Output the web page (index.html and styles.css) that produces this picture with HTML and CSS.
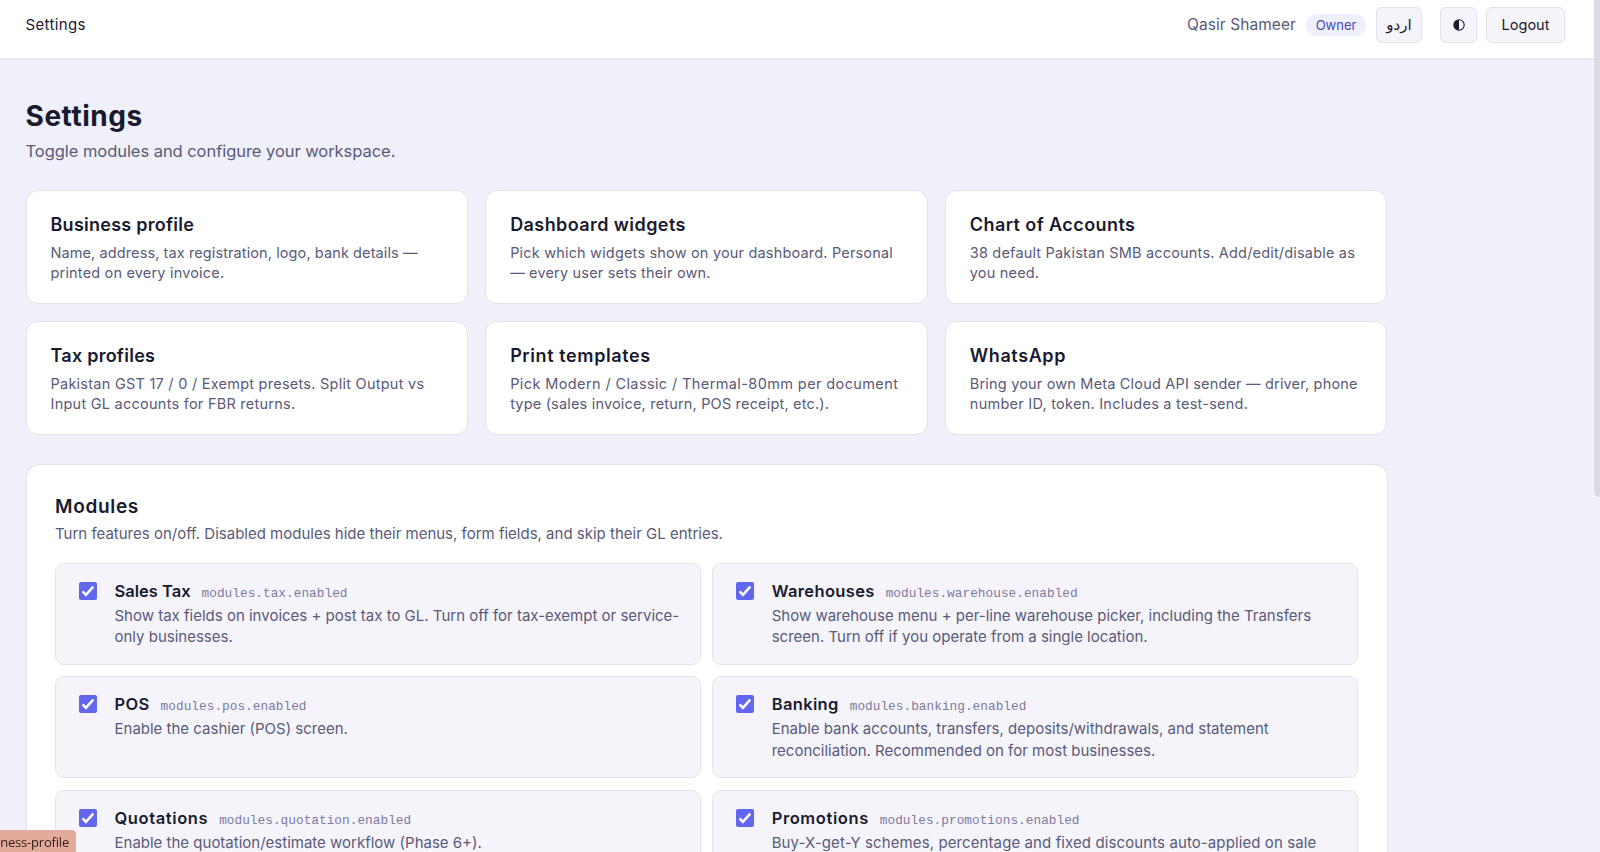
FILE: index.html
```
<!DOCTYPE html>
<html lang="en">
<head>
<meta charset="utf-8">
<title>Settings</title>
<link rel="stylesheet" href="styles.css">
</head>
<body>
<header class="topbar">
  <span class="crumb">Settings</span>
  <div class="actions">
    <span class="user">Qasir Shameer</span>
    <span class="role">Owner</span>
    <button class="btn btn-lang" lang="ur">اردو</button>
    <button class="btn btn-theme" aria-label="Theme"><svg width="12" height="12" viewBox="0 0 12 12"><circle cx="6" cy="6" r="5.2" fill="none" stroke="#1a1a2e" stroke-width="1.1"/><path d="M6 1a5 5 0 0 0 0 10z" fill="#1a1a2e"/></svg></button>
    <button class="btn btn-logout">Logout</button>
  </div>
</header>
<main class="page">
  <h1 class="title">Settings</h1>
  <p class="subtitle">Toggle modules and configure your workspace.</p>
  <section class="cards">
    <a class="card"><h2 class="card-title snug">Business profile</h2><p class="card-text"><span class="tight">Name, address, tax registration, logo, bank details —</span><br>printed on every invoice.</p></a>
    <a class="card"><h2 class="card-title">Dashboard widgets</h2><p class="card-text">Pick which widgets show on your dashboard. Personal<br>— every user sets their own.</p></a>
    <a class="card"><h2 class="card-title">Chart of Accounts</h2><p class="card-text">38 default Pakistan SMB accounts. Add/edit/disable as<br>you need.</p></a>
    <a class="card"><h2 class="card-title snug">Tax profiles</h2><p class="card-text"><span class="snug">Pakistan GST 17 / 0 / Exempt presets. Split Output vs</span><br><span class="snug">Input GL accounts for FBR returns.</span></p></a>
    <a class="card"><h2 class="card-title wide">Print templates</h2><p class="card-text"><span class="loose">Pick Modern / Classic / Thermal-80mm per document</span><br>type (sales invoice, return, POS receipt, etc.).</p></a>
    <a class="card"><h2 class="card-title wide">WhatsApp</h2><p class="card-text">Bring your own Meta Cloud API sender — driver, phone<br><span class="snug">number ID, token. Includes a test-send.</span></p></a>
  </section>
  <section class="panel">
    <h2 class="panel-title">Modules</h2>
    <p class="panel-text">Turn features on/off. Disabled modules hide their menus, form fields, and skip their GL entries.</p>
    <div class="modules">
      <label class="module"><svg class="check" viewBox="0 0 18 18"><rect width="18" height="18" rx="2" fill="#6366f1"/><path d="M3.6 9.4l3.3 3.4 7.4-8.2" fill="none" stroke="#fff" stroke-width="2.5"/></svg><div class="module-body"><div class="module-head"><strong class="flat">Sales Tax</strong><code>modules.tax.enabled</code></div><p class="module-text">Show tax fields on invoices + post tax to GL. Turn off for tax-exempt or service-<br>only businesses.</p></div></label>
      <label class="module"><svg class="check" viewBox="0 0 18 18"><rect width="18" height="18" rx="2" fill="#6366f1"/><path d="M3.6 9.4l3.3 3.4 7.4-8.2" fill="none" stroke="#fff" stroke-width="2.5"/></svg><div class="module-body"><div class="module-head"><strong>Warehouses</strong><code>modules.warehouse.enabled</code></div><p class="module-text">Show warehouse menu + per-line warehouse picker, including the Transfers<br>screen. Turn off if you operate from a single location.</p></div></label>
      <label class="module"><svg class="check" viewBox="0 0 18 18"><rect width="18" height="18" rx="2" fill="#6366f1"/><path d="M3.6 9.4l3.3 3.4 7.4-8.2" fill="none" stroke="#fff" stroke-width="2.5"/></svg><div class="module-body"><div class="module-head"><strong>POS</strong><code>modules.pos.enabled</code></div><p class="module-text">Enable the cashier (POS) screen.</p></div></label>
      <label class="module"><svg class="check" viewBox="0 0 18 18"><rect width="18" height="18" rx="2" fill="#6366f1"/><path d="M3.6 9.4l3.3 3.4 7.4-8.2" fill="none" stroke="#fff" stroke-width="2.5"/></svg><div class="module-body"><div class="module-head"><strong>Banking</strong><code>modules.banking.enabled</code></div><p class="module-text">Enable bank accounts, transfers, deposits/withdrawals, and statement<br>reconciliation. Recommended on for most businesses.</p></div></label>
      <label class="module"><svg class="check" viewBox="0 0 18 18"><rect width="18" height="18" rx="2" fill="#6366f1"/><path d="M3.6 9.4l3.3 3.4 7.4-8.2" fill="none" stroke="#fff" stroke-width="2.5"/></svg><div class="module-body"><div class="module-head"><strong class="wide">Quotations</strong><code>modules.quotation.enabled</code></div><p class="module-text">Enable the quotation/estimate workflow (Phase 6+).</p></div></label>
      <label class="module"><svg class="check" viewBox="0 0 18 18"><rect width="18" height="18" rx="2" fill="#6366f1"/><path d="M3.6 9.4l3.3 3.4 7.4-8.2" fill="none" stroke="#fff" stroke-width="2.5"/></svg><div class="module-body"><div class="module-head"><strong class="wide">Promotions</strong><code>modules.promotions.enabled</code></div><p class="module-text tight">Buy-X-get-Y schemes, percentage and fixed discounts auto-applied on sale</p></div></label>
    </div>
  </section>
</main>
<div class="scroll-thumb"></div>
<div class="status">ness-profile</div>
</body>
</html>
```
FILE: styles.css
```
* { box-sizing: border-box; margin: 0; }
html, body { height: 852px; overflow: hidden; }
body { background: #eff0f9; color: #1a1a2e; font-family: Inter, "DejaVu Sans", sans-serif; font-size: 15px; }
.topbar { height: 60px; padding: 7px 35px 0 25.5px; background: #fff; border-bottom: 2px solid #e5e5ee; display: flex; align-items: flex-start; justify-content: space-between; }
.crumb { line-height: 35px; font-size: 15px; letter-spacing: .36px; }
.actions { display: flex; align-items: center; height: 35px; }
.user { color: #5a5a78; font-size: 15.5px; letter-spacing: .07px; margin-right: 10px; }
.role { display: flex; justify-content: center; width: 60px; height: 22px; border-radius: 11px; background: #eef0ff; color: #4f46b5; font-size: 13px; line-height: 22px; margin-right: 10px; }
.btn { height: 36px; padding: 0; border: 1px solid #e2e1ec; border-radius: 6px; background: #f5f4fb; color: #1a1a2e; font: 15px Inter, "DejaVu Sans", sans-serif; display: flex; align-items: center; justify-content: center; }
.btn-lang { width: 46px; margin-right: 18px; }
.btn-theme { width: 37px; margin-right: 9px; }
.btn-logout { width: 79px; font-size: 14.5px; }
.page { display: flex; flex-direction: column; width: 1413px; height: 792px; padding: 37px 25.5px 0; overflow: hidden; }
.title { font-size: 28px; font-weight: 700; line-height: 39px; letter-spacing: .55px; }
.subtitle { margin-top: 3px; font-size: 16.5px; line-height: 24px; letter-spacing: -.05px; color: #5a5a78; }
.cards { display: grid; grid-template-columns: repeat(3, minmax(0, 1fr)); gap: 17px; margin-top: 27px; }
.card { height: 114px; padding: 20px 24px; border: 1px solid #e2e1ec; border-radius: 12px; background: #fff; white-space: nowrap; }
.card-title { font-size: 18px; font-weight: 600; line-height: 27px; letter-spacing: .42px; }
.card-text { margin-top: 5px; font-size: 14.5px; line-height: 20.3px; letter-spacing: .18px; color: #5a5a78; }
.panel { flex: 1; min-height: 0; margin-top: 29px; padding: 28px 28.5px 0; border: 1px solid #e2e1ec; border-bottom: 0; border-radius: 14px 14px 0 0; background: #fff; overflow: hidden; }
.panel-title { font-size: 19px; font-weight: 600; line-height: 28px; letter-spacing: .68px; }
.panel-text { margin-top: 2px; font-size: 15px; line-height: 22px; color: #5a5a78; white-space: nowrap; }
.modules { display: grid; grid-template-columns: repeat(2, minmax(0, 1fr)); gap: 11.4px; margin-top: 18px; }
.module { height: 102px; padding: 14px 22.5px; display: flex; gap: 18px; border: 1px solid #e4e3ed; border-radius: 9px; background: #f5f4fb; white-space: nowrap; }
.check { width: 18px; height: 18px; margin-top: 4px; flex: none; }
.module-head { display: flex; align-items: baseline; gap: 11px; height: 27px; line-height: 26px; }
.module-head strong { font-size: 16.5px; font-weight: 600; letter-spacing: .35px; }
.module-head code { font: 12.75px "Liberation Mono", monospace; letter-spacing: .03px; color: #7d79a0; }
.module-text { font-size: 15px; line-height: 21.3px; color: #5a5a78; }
.tight { letter-spacing: .1px; }
.snug { letter-spacing: .25px; }
.loose { letter-spacing: .39px; }
.wide, .module-head .wide { letter-spacing: .6px; }
.module-head .flat { letter-spacing: 0; }
.scroll-thumb { position: fixed; top: 0; right: 0; width: 6.5px; height: 497px; background: #dadae5; border-bottom-left-radius: 6px; }
.status { position: fixed; left: 0; bottom: 0; width: 76px; height: 22px; padding-right: 7px; display: flex; justify-content: flex-end; overflow: hidden; background: #e3ab9b; border-top-right-radius: 4px; font: 13px/24px "Open Sans", sans-serif; letter-spacing: -.2px; color: #33201d; white-space: nowrap; }
```
